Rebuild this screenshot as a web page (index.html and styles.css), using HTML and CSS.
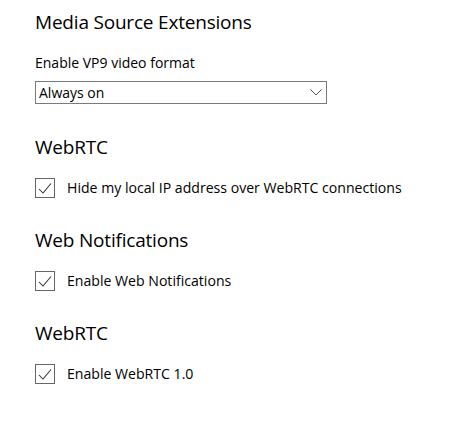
FILE: index.html
```html
<!DOCTYPE html>
<html>
<head>
<meta charset="utf-8">
<link rel="stylesheet" href="styles.css">
</head>
<body>
<div class="page">
  <section class="group group-select">
    <h2 class="heading">Media Source Extensions</h2>
    <div class="label">Enable VP9 video format</div>
    <div class="select">
      <span class="select-text">Always on</span>
      <svg class="chevron" width="12" height="7" viewBox="0 0 12 7"><path d="M0.5 0.5 L6 6 L11.5 0.5" fill="none" stroke="#555" stroke-width="1"/></svg>
    </div>
  </section>
  <section class="group">
    <h2 class="heading">WebRTC</h2>
    <label class="check">
      <span class="box"><svg width="18" height="18" viewBox="0 0 18 18"><path d="M3 10 L7 14 L15 4.5" fill="none" stroke="#333" stroke-width="1.05"/></svg></span>
      <span class="check-text">Hide my local IP address over WebRTC connections</span>
    </label>
  </section>
  <section class="group">
    <h2 class="heading">Web Notifications</h2>
    <label class="check">
      <span class="box"><svg width="18" height="18" viewBox="0 0 18 18"><path d="M3 10 L7 14 L15 4.5" fill="none" stroke="#333" stroke-width="1.05"/></svg></span>
      <span class="check-text">Enable Web Notifications</span>
    </label>
  </section>
  <section class="group">
    <h2 class="heading">WebRTC</h2>
    <label class="check">
      <span class="box"><svg width="18" height="18" viewBox="0 0 18 18"><path d="M3 10 L7 14 L15 4.5" fill="none" stroke="#333" stroke-width="1.05"/></svg></span>
      <span class="check-text">Enable WebRTC 1.0</span>
    </label>
  </section>
</div>
</body>
</html>
```
FILE: styles.css
```css
html, body {
  margin: 0;
  padding: 0;
  background: #fff;
}
body {
  font-family: "Open Sans", "Noto Sans", sans-serif;
  color: #000;
}
.page {
  padding: 8px 0 0 35px;
  display: flex;
  flex-direction: column;
}
.group {
  display: flex;
  flex-direction: column;
  margin-bottom: 28px;
}
.group-select {
  margin-bottom: 29px;
}
.heading {
  margin: 0;
  font-size: 19px;
  font-weight: 400;
  line-height: 28px;
  letter-spacing: -0.2px;
}
.label {
  margin-top: 17px;
  font-size: 14px;
  line-height: 20px;
}
.select {
  box-sizing: border-box;
  margin-top: 8px;
  width: 292px;
  height: 23px;
  border: 1px solid #7a7a7a;
  display: flex;
  align-items: center;
  justify-content: space-between;
  padding: 0 4px 0 3px;
}
.select-text {
  font-size: 14px;
}
.check {
  margin-top: 17px;
  display: flex;
  align-items: center;
  gap: 12px;
}
.box {
  width: 18px;
  height: 18px;
  border: 1px solid #666;
  display: flex;
}
.check-text {
  font-size: 14.1px;
  line-height: 20px;
}
```
